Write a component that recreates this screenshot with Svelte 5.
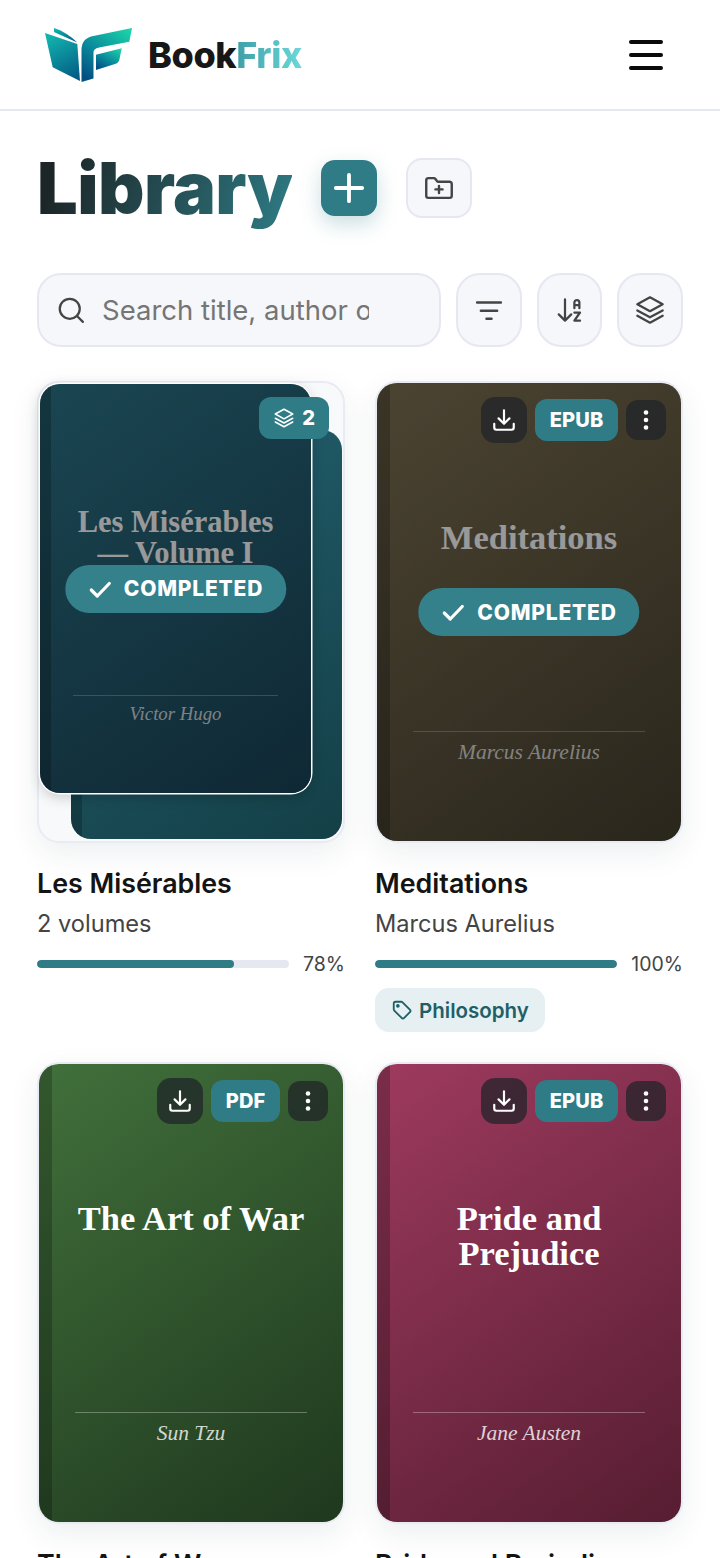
<script lang="ts">
  // Library screen: header, title row, search toolbar and a two-column book grid.
  type Book = {
    title: string;
    author: string;
    format: string;
    tone: string;
    progress?: number;
    completed?: boolean;
    tag?: string;
  };

  const books: Book[] = [
    {
      title: 'Meditations',
      author: 'Marcus Aurelius',
      format: 'EPUB',
      tone: 'brown',
      progress: 100,
      completed: true,
      tag: 'Philosophy',
    },
    { title: 'The Art of War', author: 'Sun Tzu', format: 'PDF', tone: 'green' },
    { title: 'Pride and Prejudice', author: 'Jane Austen', format: 'EPUB', tone: 'rose' },
  ];
</script>

{#snippet checkIcon()}
  <svg class="check" viewBox="0 0 24 24" fill="none" stroke="currentColor" stroke-width="3.2" stroke-linecap="round" stroke-linejoin="round"><path d="M3 13l6 6L21 6.500" /></svg>
{/snippet}

{#snippet layersIcon(size)}
  <svg width={size} height={size} viewBox="0 0 24 24" fill="none" stroke="currentColor" stroke-width="1.7" stroke-linecap="round" stroke-linejoin="round">
    <path d="M12 2.500l9.500 5.200-9.500 5.200-9.500-5.200z" />
    <path d="M2.500 12.300l9.500 5.200 9.500-5.200" />
    <path d="M2.500 16.300l9.500 5.200 9.500-5.200" />
  </svg>
{/snippet}

<div class="page">
  <header class="topbar">
    <div class="brand">
      <svg class="logo" viewBox="0 0 88 56" aria-hidden="true">
        <defs>
          <linearGradient id="logo-left" x1="0.3" y1="0" x2="0.7" y2="1">
            <stop offset="0" stop-color="#12b3ad" />
            <stop offset="1" stop-color="#045d86" />
          </linearGradient>
          <linearGradient id="logo-right" x1="0.9" y1="0" x2="0.2" y2="1">
            <stop offset="0" stop-color="#1cd3a8" />
            <stop offset="0.55" stop-color="#0a8c9c" />
            <stop offset="1" stop-color="#034f83" />
          </linearGradient>
        </defs>
        <path fill="url(#logo-left)" d="M0 6L32.300 17L35 54L7.700 40.300z" />
        <path fill="url(#logo-left)" d="M9 1C18 4 26 9 32.300 15.500L9 5z" />
        <path fill="url(#logo-right)" d="M36.500 55V24C36.500 16 39 12 46 9.500L87 1L84.300 14.700L54 20.500C50 21.500 48.500 23 48.500 26V51.500z" />
        <path fill="url(#logo-right)" d="M51 27.700L76.700 21.300L74.300 33C73.500 35.500 72 36.500 70 37L51 43z" />
      </svg>
      <span class="wordmark">Book<span class="accent">Frix</span></span>
    </div>
    <button class="menu" aria-label="Menu">
      <span></span><span></span><span></span>
    </button>
  </header>

  <main class="content">
    <div class="title-row">
      <h1>Library</h1>
      <button class="add" aria-label="Add book">
        <svg width="42" height="42" viewBox="0 0 24 24" fill="none" stroke="currentColor" stroke-width="2.200" stroke-linecap="round"><path d="M12 4.500v15M4.500 12h15" /></svg>
      </button>
      <button class="new-folder" aria-label="New folder">
        <svg width="34" height="34" viewBox="0 0 24 24" fill="none" stroke="currentColor" stroke-width="1.700" stroke-linecap="round" stroke-linejoin="round">
          <path d="M3 6.500A1.500 1.500 0 0 1 4.500 5h3.800a1.500 1.500 0 0 1 1.200.6l1 1.400c.3.400.7.600 1.200.600h7.800A1.500 1.500 0 0 1 21 9.100v8.400a1.500 1.500 0 0 1-1.500 1.500h-15A1.500 1.500 0 0 1 3 17.500z" />
          <path d="M12 10.500v5M9.500 13h5" />
        </svg>
      </button>
    </div>

    <div class="toolbar">
      <label class="search">
        <svg width="30" height="30" viewBox="0 0 24 24" fill="none" stroke="currentColor" stroke-width="1.8" stroke-linecap="round"><circle cx="11" cy="11" r="8" /><path d="M17 17l4.500 4.500" /></svg>
        <input type="text" placeholder="Search title, author or tag" />
      </label>
      <button class="tool" aria-label="Filter">
        <svg width="30" height="30" viewBox="0 0 24 24" fill="none" stroke="currentColor" stroke-width="2" stroke-linecap="round"><path d="M2.500 6h19M5.500 12.500h13M10 19h4" /></svg>
      </button>
      <button class="tool" aria-label="Sort">
        <svg width="30" height="30" viewBox="0 0 24 24" fill="none" stroke="currentColor" stroke-width="1.8" stroke-linecap="round" stroke-linejoin="round">
          <path d="M8 3.500v17M3 15.500l5 5 5-5" />
          <path d="M15.500 10.500V6a2 2 0 0 1 4 0v4.500M15.500 8h4" />
          <path d="M15.500 14h4.500l-4.500 6.500H20" />
        </svg>
      </button>
      <button class="tool" aria-label="Group">
        {@render layersIcon(32)}
      </button>
    </div>

    <div class="grid">
      <article class="book">
        <div class="cover stack">
          <div class="volume back"><div class="face tone-teal"><i class="spine"></i></div></div>
          <div class="volume front">
            <div class="face tone-navy">
              <i class="spine"></i>
              <h3>Les Misérables — Volume I</h3>
              <hr />
              <em>Victor Hugo</em>
              <div class="dim"></div>
              <div class="done">{@render checkIcon()} COMPLETED</div>
            </div>
          </div>
          <div class="count">{@render layersIcon(22)} <b>2</b></div>
        </div>
        <div class="name">Les Misérables</div>
        <div class="sub">2 volumes</div>
        <div class="progress">
          <div class="track"><div class="fill" style="width: 78%"></div></div>
          <span>78%</span>
        </div>
      </article>

      {#each books as book}
        <article class="book">
          <div class="cover">
            <div class="face tone-{book.tone}">
              <i class="spine"></i>
              <h3>{book.title}</h3>
              <hr />
              <em>{book.author}</em>
              {#if book.completed}
                <div class="dim"></div>
                <div class="done">{@render checkIcon()} COMPLETED</div>
              {/if}
            </div>
            <div class="actions">
              <button class="action download" aria-label="Download">
                <svg width="26" height="26" viewBox="0 0 24 24" fill="none" stroke="currentColor" stroke-width="2" stroke-linecap="round" stroke-linejoin="round">
                  <path d="M12 3v12M7 10.500l5 5 5-5" />
                  <path d="M3 15.500V19a2 2 0 0 0 2 2h14a2 2 0 0 0 2-2v-3.500" />
                </svg>
              </button>
              <span class="format">{book.format}</span>
              <button class="action more" aria-label="More">
                <svg width="6" height="24" viewBox="0 0 6 24" fill="currentColor"><circle cx="3" cy="4.500" r="2.300" /><circle cx="3" cy="12" r="2.300" /><circle cx="3" cy="19.500" r="2.300" /></svg>
              </button>
            </div>
          </div>
          <div class="name">{book.title}</div>
          <div class="sub">{book.author}</div>
          {#if book.progress}
            <div class="progress">
              <div class="track"><div class="fill" style="width: {book.progress}%"></div></div>
              <span>{book.progress}%</span>
            </div>
          {/if}
          {#if book.tag}
            <div class="tag">
              <svg width="22" height="22" viewBox="0 0 24 24" fill="none" stroke="currentColor" stroke-width="2" stroke-linecap="round" stroke-linejoin="round">
                <path d="M3 5v6.200c0 .5.200 1 .6 1.400l8 8a2 2 0 0 0 2.800 0l6.200-6.200a2 2 0 0 0 0-2.800l-8-8A2 2 0 0 0 11.200 3H5a2 2 0 0 0-2 2z" />
                <circle cx="7.500" cy="7.500" r="1" fill="currentColor" />
              </svg>
              {book.tag}
            </div>
          {/if}
        </article>
      {/each}
    </div>
  </main>
</div>

<style>
  :global(body) {
    background: #fff;
    font-family: Inter, 'Liberation Sans', sans-serif;
    color: #141414;
  }
  button {
    padding: 0;
    font: inherit;
    cursor: pointer;
  }
  .topbar {
    display: flex;
    align-items: center;
    justify-content: space-between;
    height: 109px;
    padding: 0 57px 0 45px;
    border-bottom: 2px solid #e5e8ec;
  }
  .brand {
    display: flex;
    align-items: center;
    gap: 15px;
  }
  .logo {
    width: 88px;
    height: 56px;
  }
  .wordmark {
    font-size: 36px;
    font-weight: 800;
    letter-spacing: -0.4px;
    color: #171717;
  }
  .accent {
    background: linear-gradient(90deg, #3f9fa8, #6bd8d8);
    -webkit-background-clip: text;
    background-clip: text;
    color: transparent;
  }
  .menu {
    display: flex;
    flex-direction: column;
    gap: 9px;
    width: 34px;
    border: 0;
    background: none;
  }
  .menu span {
    height: 4px;
    border-radius: 2px;
    background: #0a0a0a;
  }
  .content {
    padding: 32px 37px 0;
  }
  .title-row {
    display: flex;
    align-items: center;
    gap: 29px;
    height: 90px;
  }
  h1 {
    margin: 0;
    font-size: 72px;
    font-weight: 900;
    letter-spacing: -0.5px;
    line-height: 90px;
    background: linear-gradient(110deg, #1c2628 10%, #2f7c86 100%);
    -webkit-background-clip: text;
    background-clip: text;
    color: transparent;
  }
  .add {
    display: grid;
    place-items: center;
    width: 56px;
    height: 56px;
    border: 0;
    border-radius: 14px;
    color: #fff;
    background: #2f7c86;
    box-shadow: 0 8px 20px rgba(47, 124, 134, 0.25);
  }
  .new-folder {
    display: grid;
    place-items: center;
    width: 66px;
    height: 60px;
    border: 2px solid #e5e8f0;
    border-radius: 16px;
    color: #444;
    background: #f5f7fa;
  }
  .toolbar {
    display: flex;
    gap: 15px;
    height: 74px;
    margin-top: 40px;
  }
  .search {
    display: flex;
    align-items: center;
    gap: 16px;
    flex: 1;
    min-width: 0;
    padding: 0 70px 0 17px;
    border: 2px solid #e5e8f0;
    border-radius: 24px;
    color: #444;
    background: #f5f7fa;
  }
  .search input {
    flex: 1;
    min-width: 0;
    border: 0;
    outline: 0;
    padding: 0;
    font: 400 27.5px Inter, sans-serif;
    background: transparent;
  }
  .search input::placeholder {
    color: #757575;
    opacity: 1;
  }
  .tool {
    display: grid;
    place-items: center;
    width: 65.67px;
    flex: none;
    border: 2px solid #e5e8f0;
    border-radius: 24px;
    color: #444;
    background: #f5f7fa;
  }
  .grid {
    display: grid;
    grid-template-columns: 1fr 1fr;
    gap: 30px;
    margin-top: 34px;
  }
  .book {
    min-width: 0;
  }
  .cover {
    position: relative;
    box-sizing: border-box;
    height: 462px;
    border: 2px solid #e8ebf2;
    border-radius: 22px;
    box-shadow: 0 10px 30px rgba(30, 50, 60, 0.08);
  }
  .stack {
    background: #f8f9fb;
  }
  .face {
    position: absolute;
    inset: 0;
    overflow: hidden;
    display: grid;
    grid-template-rows: 30% 46% auto;
    border-radius: 20px;
    text-align: center;
    color: #fff;
  }
  .volume {
    position: absolute;
    width: 271px;
    height: 409px;
    border-radius: 20px;
  }
  .front {
    left: 1px;
    top: 1px;
    box-shadow: 0 0 0 1.5px #fff, 0 4px 14px rgba(0, 0, 0, 0.2);
  }
  .back {
    left: 32px;
    top: 47px;
  }
  .spine {
    position: absolute;
    left: 0;
    top: 0;
    bottom: 0;
    width: 4.2%;
    background: rgba(0, 0, 0, 0.22);
  }
  .face h3 {
    grid-row: 2;
    margin: 0;
    padding: 0 10%;
    font: 700 34.5px/35px 'Liberation Serif', serif;
  }
  .front h3 {
    font-size: 30.5px;
    line-height: 31px;
  }
  .face hr {
    position: absolute;
    left: 12%;
    right: 12%;
    top: 76%;
    margin: 0;
    border: 0;
    border-top: 1px solid rgba(255, 255, 255, 0.3);
  }
  .face em {
    grid-row: 3;
    padding-top: 3%;
    font: italic 21.5px 'Liberation Serif', serif;
    color: rgba(255, 255, 255, 0.8);
  }
  .front em {
    font-size: 18.8px;
  }
  .dim {
    position: absolute;
    inset: 0;
    background: rgba(0, 0, 0, 0.4);
  }
  .done {
    position: absolute;
    left: 50%;
    top: 50%;
    transform: translate(-50%, -50%);
    display: flex;
    align-items: center;
    gap: 12px;
    height: 48px;
    padding: 0 23px;
    border-radius: 24px;
    font: 800 21px Inter, sans-serif;
    letter-spacing: 0.8px;
    white-space: nowrap;
    color: #fff;
    background: #34808b;
  }
  .check {
    width: 24px;
    height: 24px;
  }
  .tone-navy {
    background: linear-gradient(145deg, #2c7588 0%, #1a4358 100%);
  }
  .tone-teal {
    background: linear-gradient(145deg, #236270 0%, #143f47 100%);
  }
  .tone-brown {
    background: linear-gradient(145deg, #7f7254 0%, #46402f 100%);
  }
  .tone-green {
    background: linear-gradient(145deg, #41703b 0%, #1f381e 100%);
  }
  .tone-rose {
    background: linear-gradient(145deg, #9e3a5e 0%, #561d31 100%);
  }
  .count {
    position: absolute;
    top: 14px;
    right: 14px;
    display: flex;
    align-items: center;
    gap: 7px;
    height: 42px;
    padding: 0 14px;
    border-radius: 12px;
    font-size: 20px;
    color: #fff;
    background: #2f7c86;
  }
  .count b {
    font-weight: 800;
  }
  .actions {
    position: absolute;
    top: 14px;
    right: 15px;
    display: flex;
    align-items: center;
    gap: 8px;
  }
  .action {
    display: grid;
    place-items: center;
    border: 0;
    color: #fff;
    background: rgba(30, 35, 40, 0.72);
  }
  .action.download {
    width: 46px;
    height: 46px;
    border-radius: 14px;
  }
  .action.more {
    width: 40px;
    height: 40px;
    border-radius: 12px;
  }
  .format {
    display: grid;
    place-items: center;
    height: 42px;
    padding: 0 14.500px;
    border-radius: 12px;
    font-size: 20px;
    font-weight: 800;
    letter-spacing: 0.2px;
    color: #fff;
    background: #2f7c86;
  }
  .name {
    margin-top: 23px;
    font-size: 26.8px;
    font-weight: 600;
    line-height: 34px;
    color: #141414;
  }
  .sub {
    margin-top: 8px;
    font-size: 23.6px;
    line-height: 32px;
    color: #444;
  }
  .progress {
    display: flex;
    align-items: center;
    gap: 14px;
    margin-top: 10px;
    height: 28px;
  }
  .track {
    flex: 1;
    height: 8px;
    border-radius: 4px;
    background: #e5e8f0;
    overflow: hidden;
  }
  .fill {
    height: 100%;
    border-radius: 4px;
    background: #2f7c86;
  }
  .progress span {
    font-size: 19.5px;
    color: #444;
  }
  .tag {
    display: inline-flex;
    align-items: center;
    gap: 6px;
    height: 44px;
    margin-top: 10px;
    padding: 0 16px;
    border-radius: 14px;
    font-size: 20.5px;
    font-weight: 600;
    color: #1f5f68;
    background: #e6eff1;
  }
</style>
